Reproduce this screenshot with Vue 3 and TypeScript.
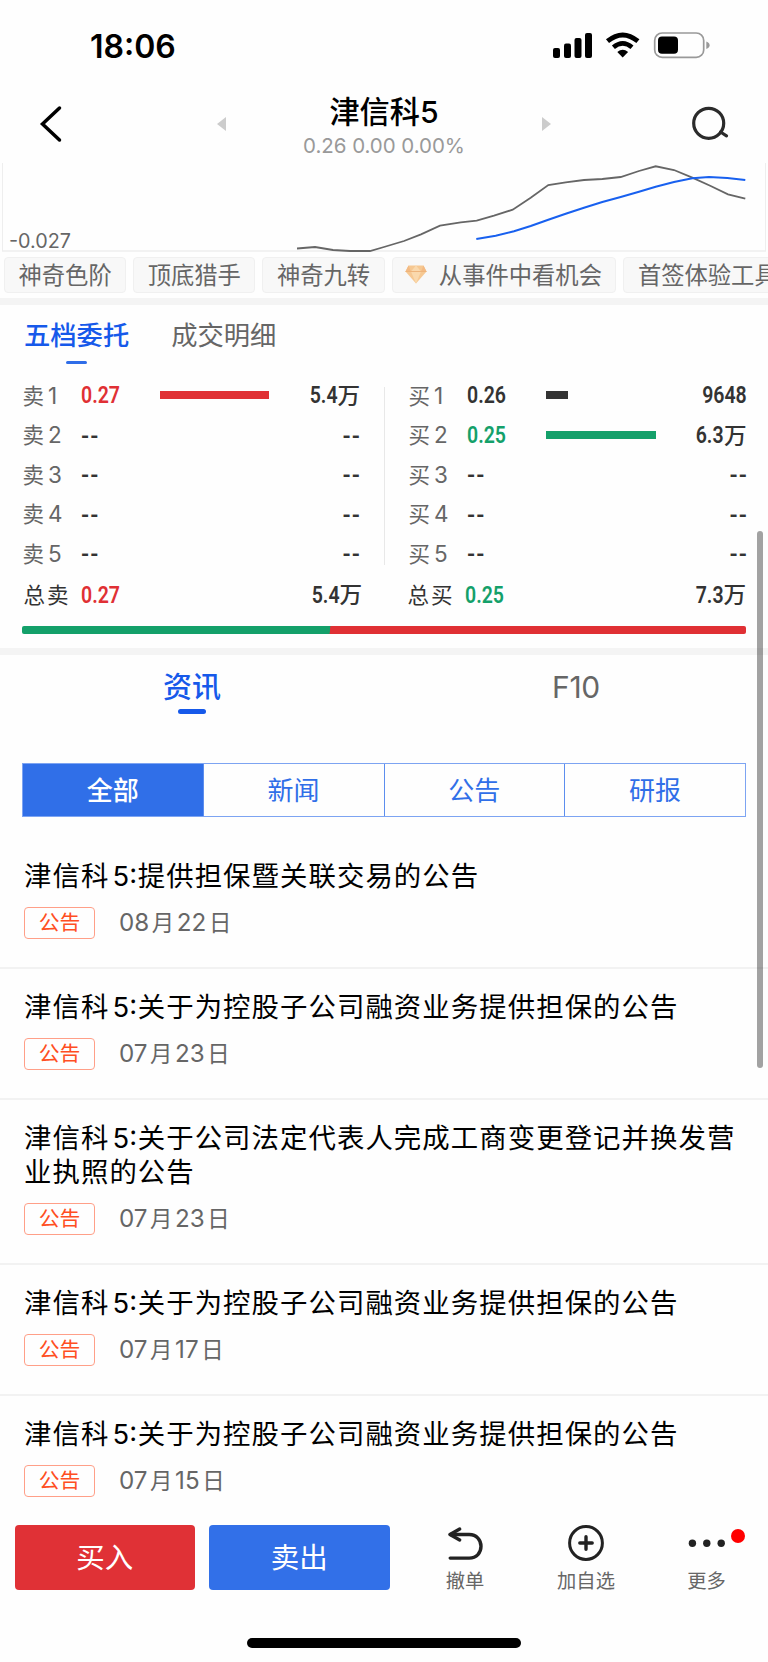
<script setup lang="ts">
interface Level {
  label: string
  index?: string
  price: string
  tone: 'up' | 'down' | 'flat' | 'none'
  bar: number
  volume: string
  unit?: string
}

interface NewsItem {
  title: string
  month: string
  day: string
}

const chips: { text: string; gem?: boolean }[] = [
  { text: '神奇色阶' },
  { text: '顶底猎手' },
  { text: '神奇九转' },
  { text: '从事件中看机会', gem: true },
  { text: '首签体验工具' },
]

const empty = (label: string, index: string): Level => ({
  label, index, price: '--', tone: 'none', bar: 0, volume: '--',
})

const sides: { name: string; rows: Level[] }[] = [
  {
    name: 'sell',
    rows: [
      { label: '卖', index: '1', price: '0.27', tone: 'up', bar: 109, volume: '5.4', unit: '万' },
      empty('卖', '2'), empty('卖', '3'), empty('卖', '4'), empty('卖', '5'),
    ],
  },
  {
    name: 'buy',
    rows: [
      { label: '买', index: '1', price: '0.26', tone: 'flat', bar: 22, volume: '9648' },
      { label: '买', index: '2', price: '0.25', tone: 'down', bar: 110, volume: '6.3', unit: '万' },
      empty('买', '3'), empty('买', '4'), empty('买', '5'),
    ],
  },
]

const totals: Level[] = [
  { label: '总卖', price: '0.27', tone: 'up', bar: 0, volume: '5.4', unit: '万' },
  { label: '总买', price: '0.25', tone: 'down', bar: 0, volume: '7.3', unit: '万' },
]

const filters = ['全部', '新闻', '公告', '研报']

const news: NewsItem[] = [
  { title: '提供担保暨关联交易的公告', month: '08', day: '22' },
  { title: '关于为控股子公司融资业务提供担保的公告', month: '07', day: '23' },
  { title: '关于公司法定代表人完成工商变更登记并换发营业执照的公告', month: '07', day: '23' },
  { title: '关于为控股子公司融资业务提供担保的公告', month: '07', day: '17' },
  { title: '关于为控股子公司融资业务提供担保的公告', month: '07', day: '15' },
]
</script>

<template>
  <div class="screen">
    <header class="status">
      <span class="clock">18:06</span>
      <svg class="status-icons" width="160" height="30" viewBox="550 30 160 30">
        <rect x="553" y="48" width="7" height="10" rx="2" />
        <rect x="564" y="43.5" width="7" height="14.5" rx="2" />
        <rect x="574.5" y="38" width="7" height="20" rx="2" />
        <rect x="585" y="33" width="7" height="25" rx="2" />
        <path d="M622.7 57.5L617.3 52Q622.7 47.7 628.1 52Z" />
        <path d="M607.5 41.2Q622.7 28.6 637.9 41.2" fill="none" stroke="#000" stroke-width="4.8" />
        <path d="M613.4 47.3Q622.7 39.5 632 47.3" fill="none" stroke="#000" stroke-width="4.6" />
        <rect x="654.7" y="33" width="49" height="24.4" rx="7.5" fill="none" stroke="#999" stroke-width="1.7" />
        <rect x="658" y="36.5" width="20" height="17.3" rx="4" />
        <path d="M706.3 41.5Q709.6 42.8 709.6 45.3T706.3 49Z" fill="#999" />
      </svg>
    </header>

    <nav class="nav">
      <svg class="back" width="24" height="40" viewBox="0 0 24 40">
        <path d="M20.5 4L3.5 20L20.5 36" fill="none" stroke="#000" stroke-width="3.5" stroke-linecap="round" />
      </svg>
      <svg class="prev" width="9" height="14" viewBox="0 0 9 14"><path d="M9 0V14L0 7Z" fill="#ccc" /></svg>
      <div class="stock">
        <div class="stock-name">津信科5</div>
        <div class="stock-quote">0.26 0.00 0.00%</div>
      </div>
      <svg class="next" width="9" height="14" viewBox="0 0 9 14"><path d="M0 0V14L9 7Z" fill="#ccc" /></svg>
      <svg class="search" width="40" height="36" viewBox="690 105 40 36" fill="none" stroke="#2b2b2b" stroke-width="3.2" stroke-linecap="round">
        <circle cx="708.7" cy="123.3" r="15" />
        <path d="M720.5 132L726.5 135.8" />
      </svg>
    </nav>

    <section class="chart">
      <svg width="768" height="90" viewBox="0 163 768 90" fill="none">
        <path d="M2.5 163V251M765.5 163V251" stroke="#eee" />
        <path d="M2 251H766" stroke="#eee" stroke-width="1.6" />
        <path d="M297 248.5L315 247L333 250L350 251H370L384 247L404 241L421 234.3L440 225.7L460.7 222.3L476.7 220.7L494 215.7L512.7 209.7L530.7 197.7L548.3 185L565.7 182.3L584 180L602.3 179L620.7 177L639 171L655.7 166.3L674 170L692.3 177.7L710.7 186L728 194.3L745.3 198.7" stroke="#666" stroke-width="1.8" />
        <path d="M476.3 239L495.7 235.7L514 231.3L530.7 226L548.3 219.7L565.7 213.7L584 207.7L602.3 202L620.7 197L639 191.7L655.7 186.7L674 182L692.3 178.3L709 177L727.3 178L745.3 180" stroke="#1860ef" stroke-width="2" />
      </svg>
      <span class="axis">-0.027</span>
    </section>

    <section class="chips">
      <div v-for="chip in chips" :key="chip.text" class="chip">
        <svg v-if="chip.gem" class="gem" width="22" height="19" viewBox="0 0 22 19">
          <path d="M3.5 0.5H18.5L21.5 6.5L11 18.5L0.5 6.5Z" fill="#f6c892" />
          <path d="M3.5 0.5L6 6.5H0.5ZM18.5 0.5L16 6.5H21.5Z" fill="#f3ba83" />
          <path d="M6 6.5L11 0.5L16 6.5L11 18.5Z" fill="#fad9ad" />
          <path d="M0.5 6.5H21.5" stroke="#eeb47b" />
        </svg>
        <span>{{ chip.text }}</span>
      </div>
    </section>

    <div class="band"></div>

    <div class="book-tabs">
      <span class="book-tab active">五档委托</span>
      <span class="book-tab">成交明细</span>
    </div>

    <section class="book">
      <div v-for="side in sides" :key="side.name" class="side" :class="side.name">
        <div v-for="row in side.rows" :key="row.index" class="level">
          <span class="level-label">{{ row.label }}<i>{{ row.index }}</i></span>
          <span class="price num" :class="row.tone">{{ row.price }}</span>
          <span class="track"><span class="bar" :class="row.tone" :style="{ width: row.bar + 'px' }"></span></span>
          <span class="volume"><span class="num" :class="{ none: row.tone === 'none' }">{{ row.volume }}</span><em v-if="row.unit">{{ row.unit }}</em></span>
        </div>
      </div>
    </section>
    <section class="totals">
      <div v-for="t in totals" :key="t.label" class="level total">
        <span class="level-label">{{ t.label }}</span>
        <span class="price num" :class="t.tone">{{ t.price }}</span>
        <span class="track"></span>
        <span class="volume"><span class="num">{{ t.volume }}</span><em>{{ t.unit }}</em></span>
      </div>
    </section>
    <div class="ratio"></div>

    <div class="band"></div>

    <div class="info-tabs">
      <span class="info-tab active">资讯</span>
      <span class="info-tab">F10</span>
    </div>

    <div class="filters">
      <span v-for="(f, i) in filters" :key="f" class="filter" :class="{ on: i === 0 }">{{ f }}</span>
    </div>

    <section class="news">
      <article v-for="(n, i) in news" :key="i" class="item">
        <h3 class="title">津信科<span class="code">5:</span>{{ n.title }}</h3>
        <div class="meta">
          <span class="tag">公告</span>
          <span class="date">{{ n.month }}<i>月</i>{{ n.day }}<i>日</i></span>
        </div>
      </article>
    </section>

    <footer class="footer">
      <button class="trade buy-btn">买入</button>
      <button class="trade sell-btn">卖出</button>
      <div class="action undo">
        <svg width="44" height="40" viewBox="443.3 1522.5 44 40" fill="none" stroke="#222" stroke-width="3.4" stroke-linecap="round">
          <path d="M450.5 1534H469.5C477 1534 481.3 1539.5 481.3 1545.8S477 1557.6 469.5 1557.6H450.5" />
          <path d="M460 1528.5L450.3 1534L460 1539.5" stroke-linejoin="round" />
        </svg>
        <span>撤单</span>
      </div>
      <div class="action add">
        <svg width="44" height="40" viewBox="564 1523 44 40" fill="none" stroke="#222" stroke-width="3" stroke-linecap="round">
          <circle cx="586" cy="1543" r="16.4" />
          <path d="M579.8 1543H592.2M586 1536.8V1549.2" stroke-width="3.4" />
        </svg>
        <span>加自选</span>
      </div>
      <div class="action more">
        <svg width="70" height="40" viewBox="672 1523 70 40" fill="#222">
          <circle cx="692.4" cy="1543.2" r="3.7" />
          <circle cx="706.8" cy="1543.2" r="3.7" />
          <circle cx="721.2" cy="1543.2" r="3.7" />
        </svg>
        <span>更多</span>
        <b class="dot"></b>
      </div>
    </footer>
    <div class="home"></div>
    <div class="scrollbar"></div>
  </div>
</template>

<style>
html,
body {
  margin: 0;
  background: #fff;
}
</style>

<style scoped>
.screen {
  position: relative;
  width: 768px;
  height: 1662px;
  overflow: hidden;
  background: #fefefe;
  font-family: Inter, "Noto Sans CJK SC", sans-serif;
  color: #111;
  display: flex;
  flex-direction: column;
}
.screen > * {
  flex-shrink: 0;
  box-sizing: border-box;
}
i,
em {
  font-style: normal;
}
svg {
  display: block;
}
.status {
  height: 90px;
  padding: 30px 58px 0 90px;
  display: flex;
  justify-content: space-between;
}
.clock {
  font-size: 32px;
  font-weight: 600;
  line-height: 34px;
  color: #000;
}
.nav {
  height: 73px;
  display: grid;
  grid-template-columns: 39px 178px 9px 316px 9px 139px 40px;
  align-items: start;
}
.back {
  grid-column: 2;
  margin-top: 14px;
}
.prev,
.next {
  margin-top: 27px;
}
.search {
  grid-column: 7;
  margin-top: 15px;
}
.stock {
  text-align: center;
  white-space: nowrap;
}
.stock-name {
  height: 42px;
  line-height: 44px;
  font-size: 30.2px;
  font-weight: 500;
  color: #000;
}
.stock-quote {
  height: 28px;
  line-height: 28px;
  font-size: 20.5px;
  color: #999;
  letter-spacing: -0.05px;
}
.chart {
  position: relative;
  height: 94px;
}
.axis {
  position: absolute;
  left: 9px;
  top: 66px;
  font-size: 19.8px;
  line-height: 24px;
  color: #666;
}
.chips {
  height: 41px;
  padding-left: 4px;
  display: flex;
  gap: 7px;
  overflow: hidden;
}
.chip {
  flex-shrink: 0;
  box-sizing: border-box;
  height: 36px;
  padding: 0 13.5px;
  display: flex;
  align-items: center;
  border: 1px solid #f0f0f0;
  border-radius: 4px;
  background: #f8f8f8;
  color: #666;
  font-size: 23.3px;
  line-height: 35px;
  white-space: nowrap;
}
.gem {
  margin: -1px 12.3px 0 -1.5px;
}
.band {
  height: 7px;
  background: #f4f4f4;
}
.book-tabs {
  height: 70.5px;
  padding-left: 24px;
  display: flex;
  gap: 42px;
}
.book-tab {
  font-size: 26.3px;
  line-height: 61px;
  height: 61px;
  color: #666;
}
.book-tab.active,
.info-tab.active {
  font-weight: 500;
  color: #1659ea;
}
.book-tab.active::after {
  content: "";
  display: block;
  width: 21px;
  height: 3px;
  margin: -5px auto 0;
  border-radius: 2px;
  background: #2f6de8;
}
.book {
  height: 197.5px;
  display: flex;
}
.side {
  width: 384px;
}
.side.buy {
  background: linear-gradient(#e8e8e8, #e8e8e8) no-repeat 0 11px / 1px 178px;
}
.level {
  height: 39.5px;
  display: grid;
  grid-template-columns: 58.5px 79px 110px 90px;
  padding-left: 22.5px;
  align-items: center;
  line-height: 39.5px;
}
.buy .level {
  grid-template-columns: 58px 79px 110px 91px;
  padding-left: 24.5px;
}
.level-label {
  font-size: 21.5px;
  color: #666;
}
.level-label i {
  margin-left: 4px;
  font-size: 22.5px;
}
.num {
  display: inline-block;
  font-family: Roboto, "Noto Sans CJK SC", sans-serif;
  font-size: 23.5px;
  font-weight: 600;
  color: #333;
  white-space: nowrap;
  transform: scaleX(0.83);
  transform-origin: left;
}
.num.none {
  letter-spacing: 1.2px;
  transform: translate(0, 0.5px) scaleX(0.95);
}
.volume {
  display: flex;
  justify-content: flex-end;
  white-space: nowrap;
}
.volume .num {
  transform-origin: right;
}
.volume .num.none {
  transform: translate(1.5px, 0.5px) scaleX(0.95);
}
.volume em {
  font-size: 22.6px;
  font-weight: 500;
  color: #333;
}
.price.up {
  color: #e03034;
}
.price.down {
  color: #14a06a;
}
.track {
  height: 8px;
  margin-top: -1px;
}
.bar {
  display: block;
  height: 8px;
  background: #333;
}
.bar.up {
  background: #e03034;
}
.bar.down {
  background: #14a06a;
}
.totals {
  height: 49px;
  display: flex;
}
.total {
  width: 384px;
  box-sizing: border-box;
  height: 43px;
  line-height: 44px;
  padding-left: 23.5px;
  grid-template-columns: 57.5px 79px 110px 92px;
}
.total .level-label {
  color: #333;
  letter-spacing: 2px;
}
.ratio {
  margin: 4px 22px 14px;
  height: 8px;
  border-radius: 2px;
  background: linear-gradient(97deg, #14a06a 42.5%, #e03034 42.6%);
}
.info-tabs {
  height: 107.5px;
  display: flex;
}
.info-tab {
  width: 384px;
  text-align: center;
  font-size: 29px;
  line-height: 65px;
  color: #666;
}
.info-tab:last-child {
  font-size: 30px;
  letter-spacing: -0.3px;
}
.info-tab.active::after {
  content: "";
  display: block;
  width: 28px;
  height: 5px;
  margin: -11px auto 0;
  border-radius: 3px;
  background: #1659ea;
}
.filters {
  height: 54px;
  margin: 0 22px;
  display: flex;
  border: 1px solid #7da4f2;
}
.filter {
  flex: 1;
  text-align: center;
  font-size: 26px;
  line-height: 53px;
  color: #306fe8;
}
.filter + .filter {
  border-left: 1px solid #5d8eee;
}
.filter.on {
  background: #306fe8;
  color: #fff;
  font-weight: 500;
}
.news {
  margin-top: 21.5px;
  height: 670px;
  overflow: hidden;
}
.item {
  padding: 20.5px 24px 28px;
  border-bottom: 2px solid #f2f2f2;
}
.title {
  margin: 0;
  font-size: 27.4px;
  font-weight: 400;
  line-height: 34px;
  letter-spacing: 1.07px;
  color: #000;
  word-break: break-all;
}
.code {
  margin: 0 0.6px 0 3.2px;
  letter-spacing: 0;
}
.meta {
  display: flex;
  align-items: center;
  height: 32px;
  margin-top: 14.5px;
}
.tag {
  box-sizing: border-box;
  width: 71px;
  height: 32px;
  border: 1.5px solid #ff9f88;
  border-radius: 4px;
  text-align: center;
  font-size: 20.8px;
  line-height: 30px;
  color: #ff4e22;
}
.date {
  margin-left: 24px;
  font-size: 24.2px;
  line-height: 32px;
  color: #666;
}
.date i {
  margin: 0 2.6px;
  font-size: 22.4px;
}
.footer {
  height: 116px;
  padding: 17px 0 0 14.5px;
  display: flex;
  align-items: flex-start;
  background: #fefefe;
}
.trade {
  width: 180.5px;
  height: 65px;
  margin: 0 14px 0 0;
  padding: 0;
  border: 0;
  border-radius: 4px;
  font-family: inherit;
  font-size: 28.5px;
  line-height: 65px;
  color: #fff;
}
.buy-btn {
  background: #e03136;
}
.sell-btn {
  background: #3270e8;
}
.action {
  position: relative;
  display: flex;
  flex-direction: column;
  align-items: center;
  margin-top: -2px;
  font-size: 19.3px;
  line-height: 36px;
  color: #666;
}
.undo {
  margin-left: 39.5px;
}
.add {
  width: 70px;
  margin-left: 64px;
}
.more {
  margin-left: 50.5px;
}
.dot {
  position: absolute;
  left: 59px;
  top: 5.5px;
  width: 14.5px;
  height: 14.5px;
  border-radius: 50%;
  background: #f00;
}
.home {
  width: 274.5px;
  height: 10px;
  margin: 14px auto 0;
  border-radius: 5px;
  background: #000;
}
.scrollbar {
  position: absolute;
  left: 757px;
  top: 531px;
  width: 5.5px;
  height: 537px;
  border-radius: 3px;
  background: rgba(0, 0, 0, 0.36);
}
</style>
